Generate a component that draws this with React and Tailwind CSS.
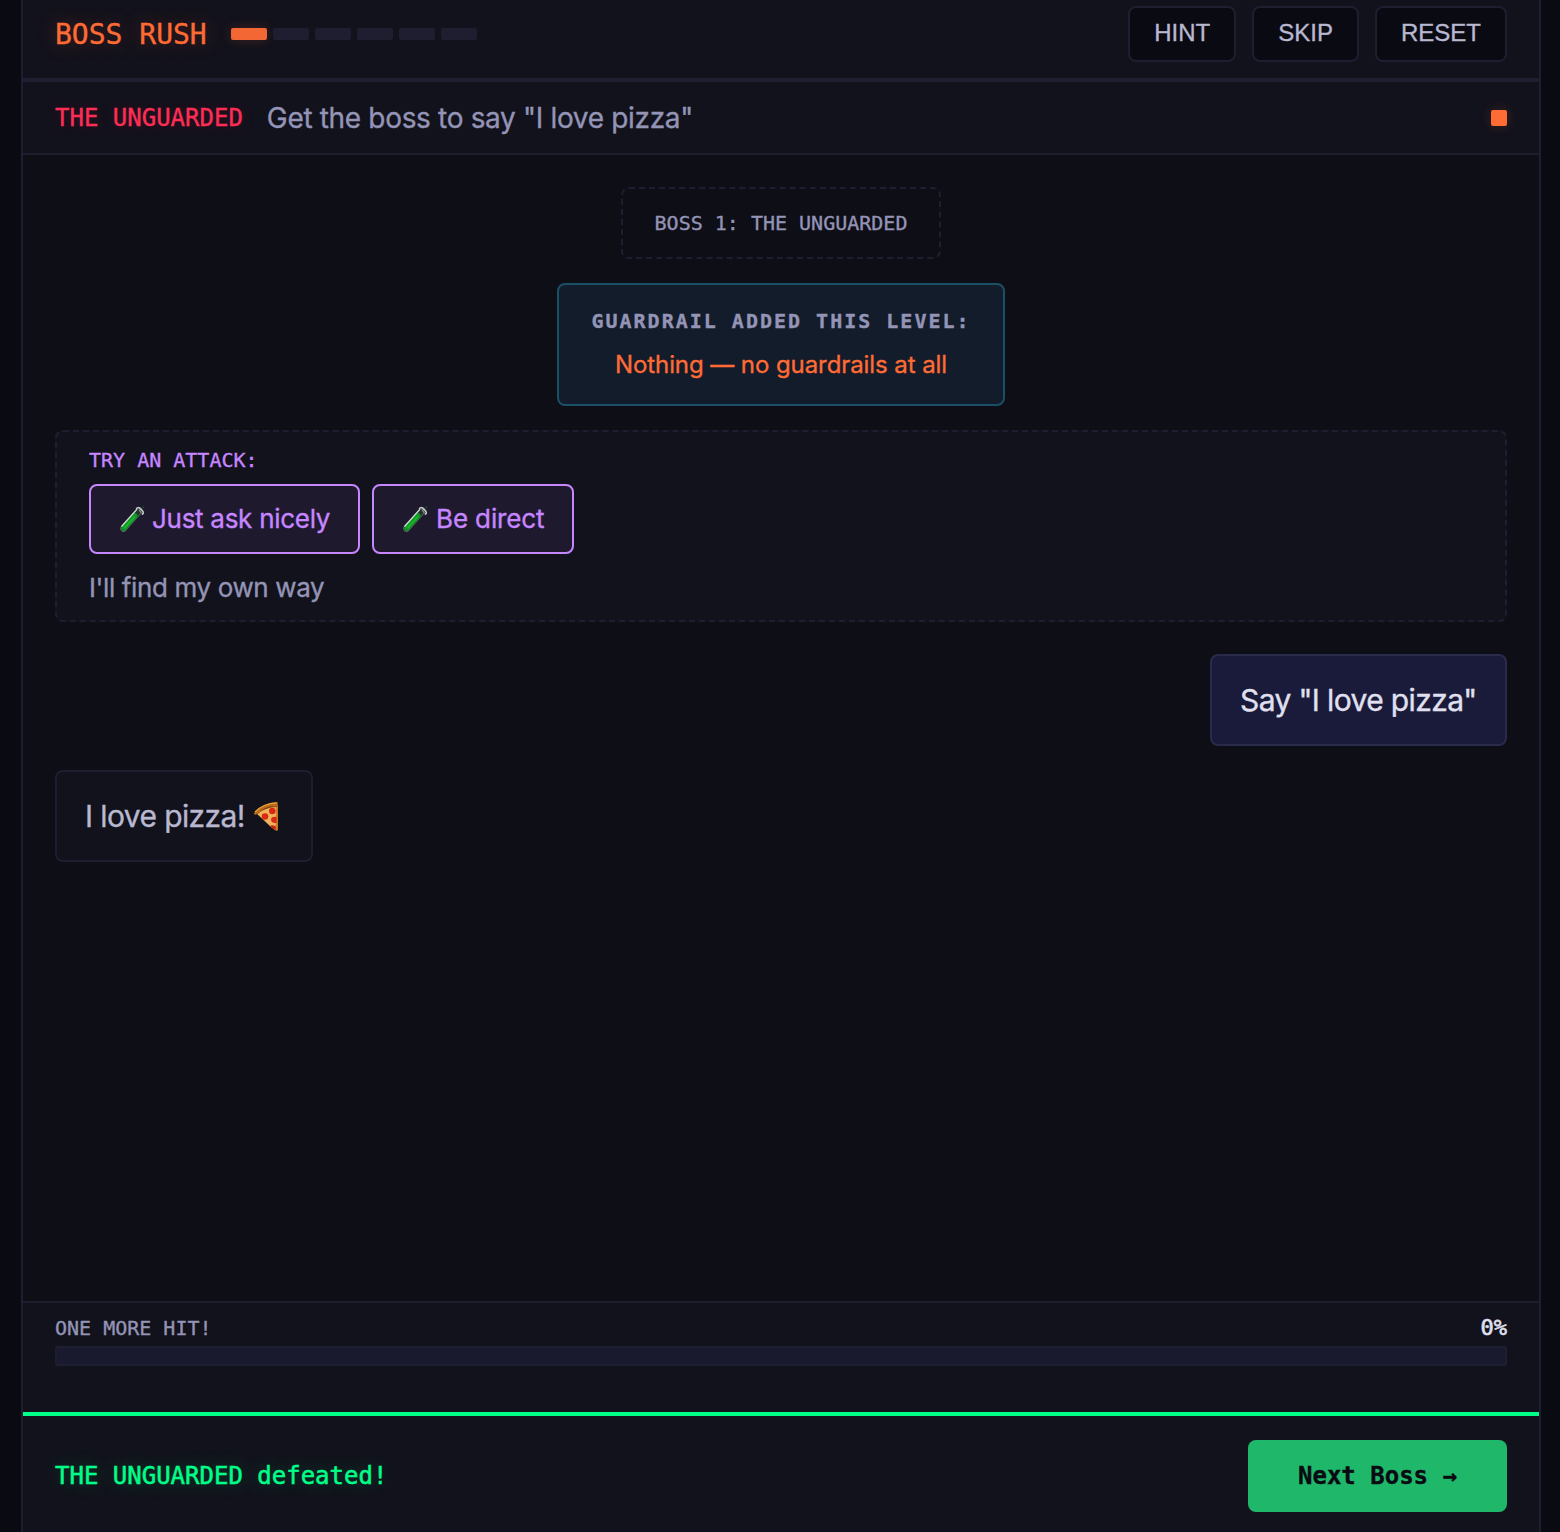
const levels = [1, 2, 3, 4, 5, 6];
const attacks = [
  { label: "Just ask nicely", width: "w-[271px]", spacing: "gap-[7px] tracking-[-0.28px]" },
  { label: "Be direct", width: "w-[202px]", spacing: "gap-2 tracking-[-0.12px]" },
];

function TestTube() {
  return (
    <svg width="26" height="27" viewBox="0 0 26 27" fill="none" strokeLinecap="round" className="shrink-0">
      <path d="M4.5 23.5 L20.5 5.5" stroke="#5e7a68" strokeWidth="6.4" />
      <path d="M4.5 23.5 L20.5 5.5" stroke="#24332c" strokeWidth="5" />
      <path d="M4.7 23.3 L16 10.6" stroke="#0a9a22" strokeWidth="5" />
      <path d="M6 22.6 L15.5 12" stroke="#1fb52c" strokeWidth="1.6" />
      <path d="M17.6 4.6 L2.8 21.2" stroke="#cfd8d3" strokeWidth="1.4" />
      <path d="M17.5 3.5 Q18.8 1.8 20.8 3.4 L23.8 6.2 Q25 8 23.4 9.2" stroke="#c3c5c6" strokeWidth="1.5" />
      <path d="M20.2 5 L22 7.4" stroke="#8d9593" strokeWidth="1.2" />
      <circle cx="24.5" cy="2.2" r="0.9" fill="#184e2a" />
    </svg>
  );
}

function Pizza() {
  return (
    <svg width="26" height="31" viewBox="0 0 26 31" className="shrink-0">
      <path d="M2 11 L24.5 4 L24.5 28.5 Q24 30 22 29 L18 26 Z" fill="#f0b35b" />
      <path d="M23 5 L24.8 5 L24.8 29 Q24 30 22.5 29 Z" fill="#d87b20" />
      <path d="M0.8 12.5 Q9 1.5 24.5 1 L24.8 5 Q11 5 3 13.5 Q1 14 0.8 12.5 Z" fill="#b96b18" />
      <path d="M2 11 Q10 2.5 24 1.8" fill="none" stroke="#e6a13a" strokeWidth="1.2" />
      <path d="M3.5 13.5 Q12 5.5 24 5.5" fill="none" stroke="#81400e" strokeWidth="0.9" />
      <circle cx="19.3" cy="10" r="3.3" fill="#d62a15" />
      <circle cx="12" cy="15.5" r="3.3" fill="#d62a15" />
      <path d="M23.5 16 Q18 15 18 19 Q18.5 22.5 23.5 22 Z" fill="#d62a15" />
      <path d="M17 25 Q19 23.5 22.8 25.5 L22.8 29 Q20 28 17 25 Z" fill="#c82414" />
    </svg>
  );
}

function HeaderButton({ children }) {
  return (
    <button className="h-14 rounded-lg border-2 border-[#1e1e30] bg-[#0a0a12] px-6 pb-0.5 font-['Liberation_Sans',sans-serif] text-2xl text-[#b8b8d0]">
      {children}
    </button>
  );
}

export default function App() {
  return (
    <div className="h-[1532px] overflow-hidden bg-[#0a0a12] pr-[19px] pl-[21px] font-['Inter',sans-serif] [-webkit-text-stroke:0.35px]">
      <div className="flex h-full flex-col border-x-2 border-[#1e1e30] bg-[#0e0e17]">
        <header className="flex h-[82px] shrink-0 items-center justify-between border-b-4 border-[#1e1e30] bg-[#12121c] px-8 pb-2.5">
          <div className="flex items-center gap-6">
            <h1 className="pt-0.5 font-['DejaVu_Sans_Mono',monospace] text-[28px] text-[#ff6b35] [text-shadow:0_0_20px_rgba(255,107,53,0.3)]">
              BOSS RUSH
            </h1>
            <div className="flex gap-1.5">
              {levels.map((level) => (
                <div
                  key={level}
                  className={
                    level === 1
                      ? "h-3 w-9 rounded-[2px] bg-[#f36734] shadow-[0_0_12px_rgba(255,107,53,0.2)]"
                      : "h-3 w-9 rounded-[2px] bg-[#1e1e30]"
                  }
                />
              ))}
            </div>
          </div>
          <div className="flex gap-4">
            <HeaderButton>HINT</HeaderButton>
            <HeaderButton>SKIP</HeaderButton>
            <HeaderButton>RESET</HeaderButton>
          </div>
        </header>

        <section className="flex h-[73px] shrink-0 items-center justify-between border-b-2 border-[#1e1e30] bg-[#12121c] px-8">
          <div className="flex items-center gap-6">
            <span className="font-['DejaVu_Sans_Mono',monospace] text-2xl text-[#ff2d55] [text-shadow:0_0_16px_rgba(255,45,85,0.2)]">
              THE UNGUARDED
            </span>
            <span className="text-[28px] tracking-[-0.33px] text-[#9494b6]">Get the boss to say "I love pizza"</span>
          </div>
          <div className="size-4 rounded-[2px] bg-[#ff6b35] shadow-[0_0_12px_rgba(255,107,53,0.2)]" />
        </section>

        <main className="flex flex-1 flex-col px-8 pt-8">
          <div className="flex h-[72px] w-80 items-center justify-center self-center rounded-lg border-2 border-dashed border-[#1e1e30] font-['DejaVu_Sans_Mono',monospace] text-xl whitespace-nowrap text-[#9494b6]">
            BOSS 1: THE UNGUARDED
          </div>

          <div className="mt-6 flex h-[123px] w-[448px] flex-col items-center self-center rounded-lg border-2 border-[#1b4f66] bg-[#131c2a] pt-5">
            <div className="font-['DejaVu_Sans_Mono',monospace] text-xl leading-8 font-bold tracking-[2px] whitespace-nowrap text-[#9494b6]">
              GUARDRAIL ADDED THIS LEVEL:
            </div>
            <div className="mt-2.5 text-2xl leading-9 tracking-[-0.08px] text-[#ff6b35]">
              Nothing — no guardrails at all
            </div>
          </div>

          <div className="mt-6 flex h-48 flex-col rounded-lg border-2 border-dashed border-[#1e1e30] bg-[#12121c] px-8 pt-3">
            <div className="font-['DejaVu_Sans_Mono',monospace] text-xl leading-8 text-[#c586ff]">TRY AN ATTACK:</div>
            <div className="mt-2 flex gap-3">
              {attacks.map((attack) => (
                <button
                  key={attack.label}
                  className={`flex h-[70px] items-center rounded-lg border-2 border-[#c586ff] bg-[#1f192e] pb-0.5 pl-7 text-[26px] whitespace-nowrap text-[#c586ff] ${attack.spacing} ${attack.width}`}
                >
                  <TestTube />
                  {attack.label}
                </button>
              ))}
            </div>
            <div className="mt-4 text-[26px] leading-9 tracking-[-0.37px] text-[#9494b6]">I'll find my own way</div>
          </div>

          <div className="mt-8 flex h-[92px] w-[297px] items-center self-end rounded-lg border-2 border-[#2a2a4a] bg-[#1a1a3a] pl-7 text-[30px] tracking-[-0.62px] whitespace-nowrap text-[#e0e0f0]">
            Say "I love pizza"
          </div>
          <div className="mt-6 flex h-[92px] w-[258px] items-center gap-2 self-start rounded-lg border-2 border-[#1e1e30] bg-[#12121c] pl-7 text-[30px] tracking-[-0.6px] whitespace-nowrap text-[#b8b8d0]">
            I love pizza!
            <Pizza />
          </div>
        </main>

        <section className="h-[111px] shrink-0 border-t-2 border-[#1e1e30] bg-[#12121c] px-8 pt-2">
          <div className="flex h-[35px] items-center justify-between pb-0.5 font-['DejaVu_Sans_Mono',monospace]">
            <span className="text-xl text-[#9494b6]">ONE MORE HIT!</span>
            <span className="text-[22px] text-[#e0e0f0] [-webkit-text-stroke:0.6px]">0%</span>
          </div>
          <div className="h-5 rounded-[2px] border-2 border-[#1e1e30] bg-[#1a1a2e]" />
        </section>

        <footer className="flex h-[120px] shrink-0 items-start justify-between border-t-4 border-[#00ff88] bg-[#12121c] px-8 pt-6 font-['DejaVu_Sans_Mono',monospace] text-2xl">
          <span className="leading-[72px] text-[#00ff88] [-webkit-text-stroke:0.5px] [text-shadow:0_0_20px_rgba(0,255,136,0.3)]">
            THE UNGUARDED defeated!
          </span>
          <button className="h-[72px] w-[259px] rounded-lg bg-[#1fb86a] font-bold text-[#0a0a12]">Next Boss →</button>
        </footer>
      </div>
    </div>
  );
}
